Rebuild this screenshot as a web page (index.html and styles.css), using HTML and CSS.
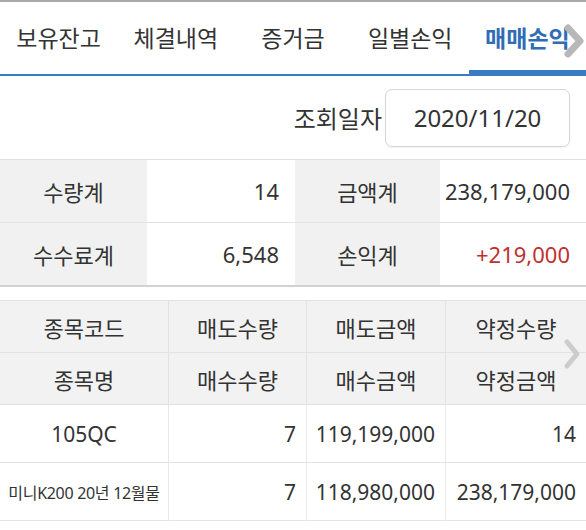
FILE: index.html
```html
<!DOCTYPE html>
<html lang="ko">
<head>
<meta charset="utf-8">
<title>매매손익</title>
<link rel="stylesheet" href="styles.css">
</head>
<body>
<div class="page">
  <nav class="tabs">
    <div class="tab">보유잔고</div>
    <div class="tab">체결내역</div>
    <div class="tab">증거금</div>
    <div class="tab">일별손익</div>
    <div class="tab active">매매손익</div>
    <svg class="chev chev-tab" width="24" height="36" viewBox="0 0 24 36"><polyline points="6,5 18,18 6,31" fill="none" stroke="#b8b8b8" stroke-width="7" stroke-linecap="round" stroke-linejoin="round"/></svg>
  </nav>

  <div class="query">
    <span class="query-label">조회일자</span>
    <div class="date-box">2020/11/20</div>
  </div>

  <div class="summary">
    <div class="s-label">수량계</div>
    <div class="s-value">14</div>
    <div class="s-label">금액계</div>
    <div class="s-value">238,179,000</div>
    <div class="s-label row2">수수료계</div>
    <div class="s-value row2">6,548</div>
    <div class="s-label row2">손익계</div>
    <div class="s-value row2 plus">+219,000</div>
  </div>

  <div class="grid-wrap">
    <div class="grid">
      <div class="h">종목코드</div>
      <div class="h">매도수량</div>
      <div class="h">매도금액</div>
      <div class="h last">약정수량</div>
      <div class="h">종목명</div>
      <div class="h">매수수량</div>
      <div class="h">매수금액</div>
      <div class="h last">약정금액</div>

      <div class="d name">105QC</div>
      <div class="d num">7</div>
      <div class="d num">119,199,000</div>
      <div class="d num last">14</div>
      <div class="d name small">미니K200 20년 12월물</div>
      <div class="d num">7</div>
      <div class="d num">118,980,000</div>
      <div class="d num last">238,179,000</div>
    </div>
    <svg class="chev chev-grid" width="22" height="32" viewBox="0 0 22 32"><polyline points="6,4 16,16 6,28" fill="none" stroke="#cccccc" stroke-width="5" stroke-linecap="round" stroke-linejoin="round"/></svg>
  </div>
</div>
</body>
</html>
```

FILE: styles.css
```css
* { box-sizing: border-box; }
html, body { margin: 0; padding: 0; background: #fff; }
body {
  font-family: "Noto Sans", "Noto Sans CJK KR", sans-serif;
  color: #333;
  width: 586px;
}
.page { width: 586px; }

.tabs {
  position: relative;
  display: flex;
  height: 76px;
  border-top: 2px solid #a9a9a9;
  border-bottom: 2px solid #3b7bc6;
}
.tab {
  flex: 1 1 0;
  display: flex;
  align-items: center;
  justify-content: center;
  font-size: 23px;
  color: #333;
  padding-bottom: 2px;
}
.tab.active {
  color: #2f6db5;
  font-weight: bold;
  box-shadow: inset 0 -4px 0 #3b7bc6;
}
.chev { position: absolute; }
.chev-tab { right: 0; top: 21px; }

.query {
  display: flex;
  justify-content: flex-end;
  align-items: center;
  height: 83px;
  padding-right: 16px;
}
.query-label {
  font-size: 24px;
  margin-right: 3px;
}
.date-box {
  width: 185px;
  height: 58px;
  border: 1px solid #d6d6d6;
  border-radius: 7px;
  display: flex;
  align-items: center;
  justify-content: center;
  font-size: 24px;
  color: #333;
  box-shadow: 0 1px 2px rgba(0,0,0,0.06);
}

.summary {
  display: grid;
  grid-template-columns: 147px 148px 145px 146px;
  border-top: 1px solid #e2e2e2;
  border-bottom: 2px solid #d2d2d2;
}
.s-label, .s-value {
  height: 62px;
  display: flex;
  align-items: center;
  font-size: 22px;
}
.s-label {
  background: #f1f1f1;
  justify-content: center;
}
.s-value {
  justify-content: flex-end;
  padding-right: 16px;
  font-size: 22px;
}
.row2 { border-top: 1px solid #e4e4e4; height: 63px; }
.plus { color: #c0302f; }

.grid-wrap {
  position: relative;
  margin-top: 13px;
}
.grid {
  display: grid;
  grid-template-columns: 169px 138px 139px 140px;
  border-top: 1px solid #e2e2e2;
}
.h {
  background: #f2f2f2;
  height: 52px;
  display: flex;
  align-items: center;
  justify-content: center;
  font-size: 22px;
  border-right: 1px solid #e2e2e2;
  border-bottom: 1px solid #e2e2e2;
}
.d {
  height: 58px;
  display: flex;
  align-items: center;
  font-size: 21px;
  border-right: 1px solid #e8e8e8;
  border-bottom: 1px solid #e4e4e4;
}
.last { border-right: none; }
.d.name { justify-content: center; }
.d.small { font-size: 16px; letter-spacing: -0.3px; }
.d.num { justify-content: flex-end; padding-right: 10px; }
.chev-grid { right: 3px; top: 38px; }
```
